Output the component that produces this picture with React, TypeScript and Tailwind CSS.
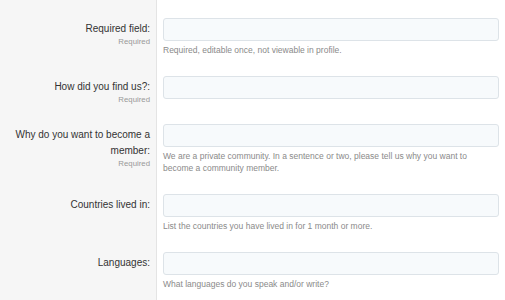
import React from 'react';

interface FieldRowProps {
  label: string;
  required?: boolean;
  help?: string;
}

const FieldRow: React.FC<FieldRowProps> = ({ label, required, help }) => {
  return (
    <div className="flex">
      <div className="w-[157px] shrink-0 bg-[#f6f6f6] border-r border-[#e4e4e4] pl-[10px] pr-[6px] pt-[3px] pb-[20px] text-right">
        <div className="text-[10px] leading-[16px] text-[#333]">{label}</div>
        {required && (
          <div className="text-[7.8px] leading-[9px] text-[#999]">Required</div>
        )}
      </div>
      <div className="flex-1 pl-[6px] pr-[6px] pb-[20px]">
        <input
          type="text"
          className="block w-full h-[23px] rounded-[3px] border border-[#dde3e8] bg-[#f7fafc] px-2 text-[10px] outline-none"
        />
        {help && (
          <p className="mt-[3px] max-w-[330px] text-[8.5px] leading-[12px] text-[#8a8a8a]">{help}</p>
        )}
      </div>
    </div>
  );
};

const App: React.FC = () => {
  return (
    <div
      className="h-[300px] w-full overflow-hidden bg-white flex flex-col"
      style={{ fontFamily: '"Liberation Sans", Arial, sans-serif' }}
    >
      <div className="flex h-[18px] shrink-0">
        <div className="w-[157px] bg-[#f6f6f6] border-r border-[#e4e4e4]" />
      </div>
      <FieldRow label="Required field:" required help="Required, editable once, not viewable in profile." />
      <FieldRow label="How did you find us?:" required />
      <FieldRow
        label="Why do you want to become a member:"
        required
        help="We are a private community. In a sentence or two, please tell us why you want to become a community member."
      />
      <FieldRow label="Countries lived in:" help="List the countries you have lived in for 1 month or more." />
      <FieldRow label="Languages:" help="What languages do you speak and/or write?" />
      <div className="flex flex-1">
        <div className="w-[157px] bg-[#f6f6f6] border-r border-[#e4e4e4]" />
      </div>
    </div>
  );
};

export default App;
